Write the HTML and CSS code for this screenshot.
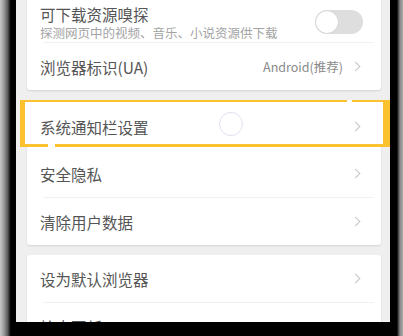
FILE: index.html
```html
<!DOCTYPE html>
<html lang="zh">
<head>
<meta charset="utf-8">
<link rel="stylesheet" href="styles.css">
</head>
<body>
<div class="device">
  <div class="bezel-left"></div>
  <div class="screen-col">
    <div class="screen">
      <div class="card card-first">
        <div class="row row-two">
          <div class="texts">
            <div class="title">可下载资源嗅探</div>
            <div class="sub">探测网页中的视频、音乐、小说资源供下载</div>
          </div>
          <div class="toggle"><div class="knob"></div></div>
        </div>
        <div class="divider"></div>
        <div class="row">
          <div class="title">浏览器标识(UA)</div>
          <div class="right"><span class="value">Android(推荐)</span><span class="chev"></span></div>
        </div>
      </div>

      <div class="card card-second">
        <div class="focus"><div class="ripple"></div></div>
        <div class="row">
          <div class="title">系统通知栏设置</div>
          <div class="right"><span class="chev"></span></div>
        </div>
        <div class="row">
          <div class="title">安全隐私</div>
          <div class="right"><span class="chev"></span></div>
        </div>
        <div class="divider"></div>
        <div class="row">
          <div class="title">清除用户数据</div>
          <div class="right"><span class="chev"></span></div>
        </div>
      </div>

      <div class="card card-third">
        <div class="row">
          <div class="title">设为默认浏览器</div>
          <div class="right"><span class="chev"></span></div>
        </div>
        <div class="divider"></div>
        <div class="row">
          <div class="title">检查更新</div>
          <div class="right"><span class="chev"></span></div>
        </div>
      </div>
    </div>
    <div class="bezel-bottom"></div>
  </div>
  <div class="bezel-right"></div>
</div>
</body>
</html>
```
FILE: styles.css
```css
html, body {
  margin: 0;
  padding: 0;
  width: 403px;
  height: 336px;
  overflow: hidden;
  background: #000;
  font-family: "Noto Sans CJK SC", "Noto Sans", sans-serif;
}

.device {
  display: flex;
  width: 403px;
  height: 336px;
}

.bezel-left {
  width: 16px;
  flex: none;
  background: linear-gradient(to right, #c8c8c8 0px, #9a9a9a 4px, #555 8px, #111 10px, #000 11px, #000 16px);
}

.bezel-right {
  width: 13px;
  flex: none;
  background: linear-gradient(to right, #000 0px, #000 7px, #333 8px, #888 10px, #aaa 13px);
}

.screen-col {
  flex: 1;
  display: flex;
  flex-direction: column;
}

.screen {
  height: 322px;
  flex: none;
  background: #efefef;
  overflow: hidden;
  padding: 0 9px 0 11px;
}

.bezel-bottom {
  flex: 1;
  background: #000;
}

.card {
  background: #fff;
  border-radius: 3px;
  box-shadow: 0 1px 2px rgba(0, 0, 0, 0.12);
  position: relative;
}

.card-first {
  margin-top: -5px;
}

.card-second {
  margin-top: 13px;
}

.card-third {
  margin-top: 10px;
}

.row {
  height: 47px;
  display: flex;
  align-items: center;
  justify-content: space-between;
  padding: 0 20px 0 13px;
  position: relative;
}

.row-two {
  height: auto;
  padding-top: 10px;
  padding-bottom: 1px;
  padding-right: 18px;
}

.title {
  font-size: 15.5px;
  color: #555;
  line-height: 18px;
}

.sub {
  font-size: 12.5px;
  color: #a3a3a3;
  line-height: 16px;
  margin-top: 2px;
}

.divider {
  height: 1px;
  background: #f1f1f1;
  margin: 0 7px 0 16px;
}

.right {
  display: flex;
  align-items: center;
  gap: 9px;
}

.value {
  font-size: 12.5px;
  color: #8a8a8a;
}

.chev {
  width: 6px;
  height: 6px;
  border-top: 1.3px solid #c4c4c4;
  border-right: 1.3px solid #c4c4c4;
  transform: rotate(45deg);
  margin-right: 2px;
}

.toggle {
  width: 48px;
  height: 24px;
  border-radius: 12px;
  background: #dedede;
  position: relative;
  margin-top: -2px;
}

.knob {
  position: absolute;
  left: 1px;
  top: 1px;
  width: 22px;
  height: 22px;
  border-radius: 50%;
  background: #fff;
  box-shadow: 0 0 1px rgba(0, 0, 0, 0.25);
}

.focus {
  position: absolute;
  left: -7px;
  right: -9px;
  top: -3px;
  height: 47px;
  box-sizing: border-box;
  border-top: 2px solid #fbc12e;
  border-bottom: 3px solid #fbc12e;
  border-left: 5px solid #fbc12e;
  border-right: 7px solid #fbc12e;
  background: #fff;
  z-index: 0;
}

.focus::before {
  content: "";
  position: absolute;
  top: -2px;
  left: 322px;
  width: 5px;
  height: 2px;
  background: #fff;
}

.focus::after {
  content: "";
  position: absolute;
  bottom: -3px;
  left: 23px;
  width: 7px;
  height: 3px;
  background: #fff;
}

.ripple {
  position: absolute;
  left: 194px;
  top: 10px;
  width: 22px;
  height: 22px;
  border-radius: 50%;
  border: 1.5px solid #dfe2f2;
}

.card-second .row {
  z-index: 1;
}
```
